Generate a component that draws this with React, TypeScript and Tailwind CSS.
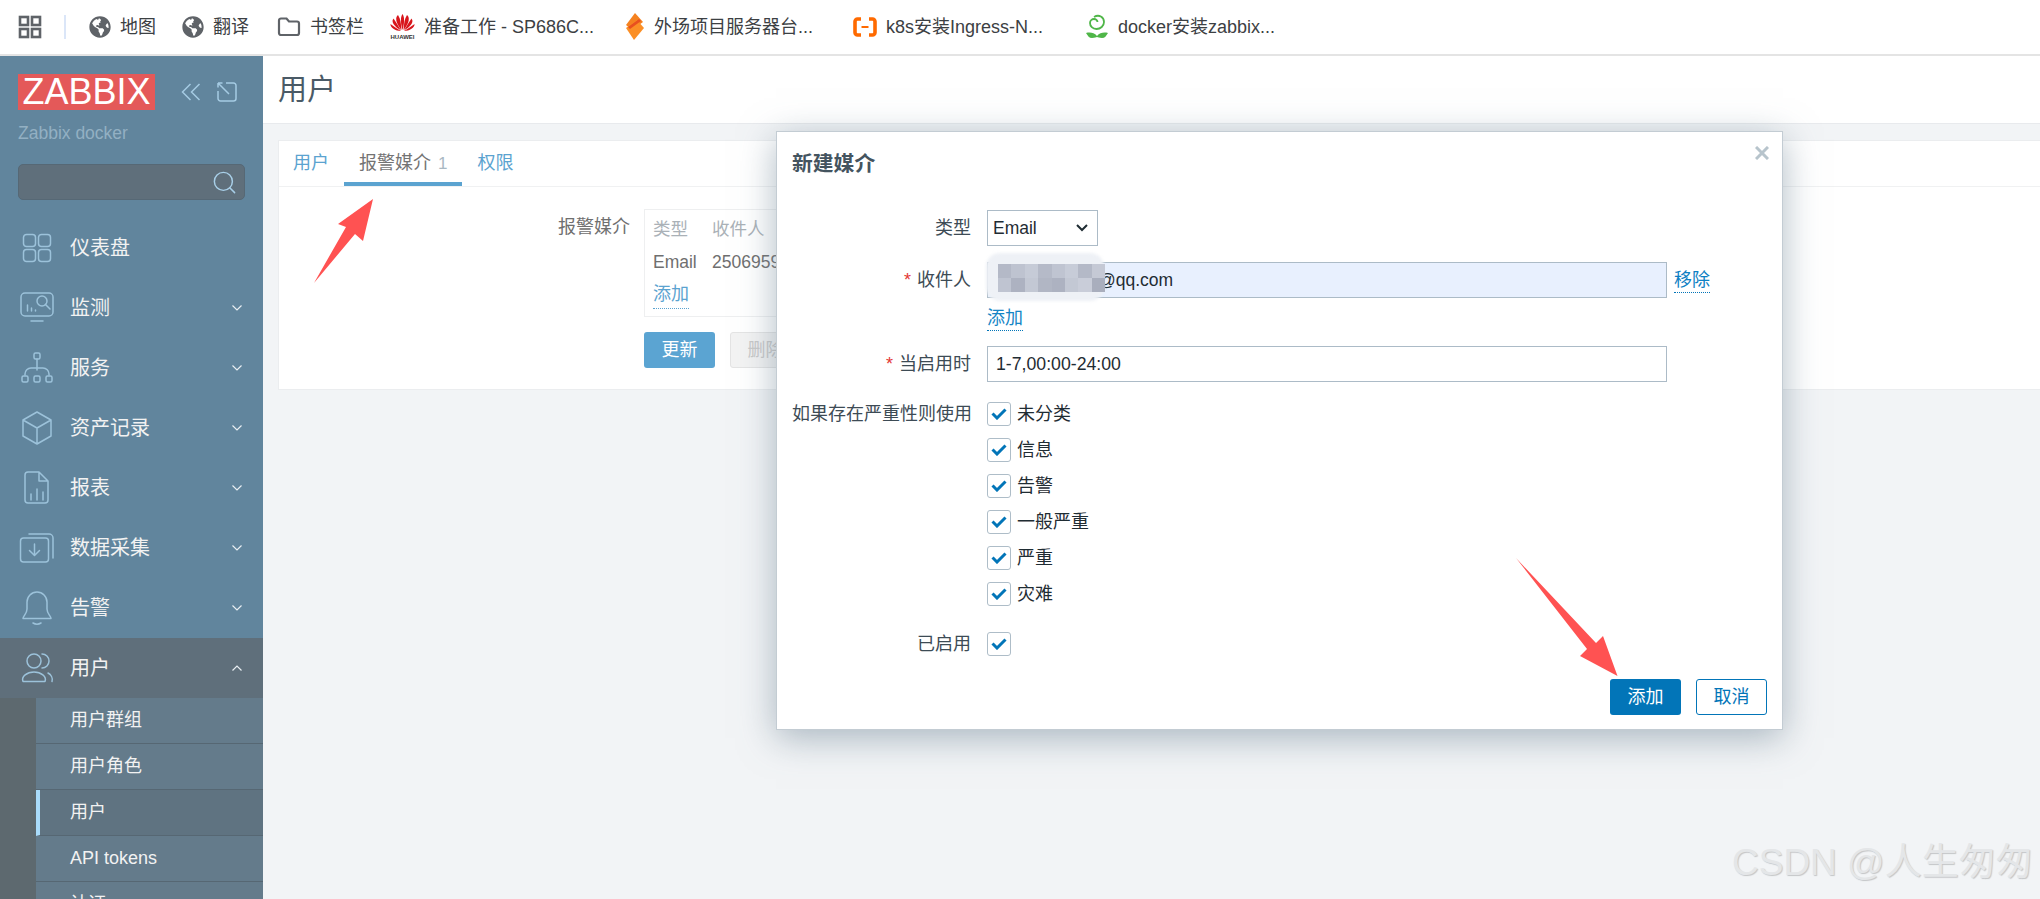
import type { ReactNode } from "react";
import { FaGlobeAmericas } from "react-icons/fa";
import { Search } from "lucide-react";

const font = "font-['Liberation_Sans','Noto_Sans_CJK_SC',sans-serif]";

const bookmarks = [
  { w: "w-[93px]", icon: "globe", text: "地图" },
  { w: "w-[95px]", icon: "globe", text: "翻译" },
  { w: "w-[113px]", icon: "folder", text: "书签栏" },
  { w: "w-[234px]", icon: "huawei", text: "准备工作 - SP686C..." },
  { w: "w-[229px]", icon: "diamond", text: "外场项目服务器台..." },
  { w: "w-[232px]", icon: "aliyun", text: "k8s安装Ingress-N..." },
  { w: "w-[240px]", icon: "leaf", text: "docker安装zabbix..." },
];

function BookmarkIcon({ name }: { name: string }) {
  if (name === "globe") return <FaGlobeAmericas size={22} className="text-[#5f6368]" />;
  if (name === "folder")
    return (
      <svg width="24" height="22" viewBox="0 0 24 22" fill="none" stroke="#5f6368" strokeWidth="2.2">
        <path d="M2 4.500a2 2 0 0 1 2-2h5.500l2.500 3h8a2 2 0 0 1 2 2V17a2 2 0 0 1-2 2H4a2 2 0 0 1-2-2z" />
      </svg>
    );
  if (name === "huawei")
    return (
      <svg width="25" height="26" viewBox="0 0 25 26">
        <g fill="#d8161c">
          <path d="M12.500 0c-2.200 3-2 9 0 16 2-7 2.200-13 0-16z" />
          <path d="M8 1C5 3 5.500 9 11.500 16 11 10 10.500 4.500 8 1z" />
          <path d="M17 1c3 2 2.500 8-3.500 15C14 10 14.500 4.500 17 1z" />
          <path d="M3.500 4.500C.5 8 5 13 11 16.500 8.500 12 6 8 3.500 4.500z" />
          <path d="M21.500 4.500c3 3.500-1.500 8.500-7.500 12 2.500-4.500 5-8.500 7.500-12z" />
          <path d="M.5 10c-.5 3.500 5 7 10.500 7C7.500 15 4 12.500.5 10z" />
          <path d="M24.500 10c.5 3.500-5 7-10.500 7 3.500-2 7-4.500 10.500-7z" />
        </g>
        <text x="12.500" y="24.500" textAnchor="middle" fontSize="6" fontWeight="700" fill="#333" fontFamily="Liberation Sans">
          HUAWEI
        </text>
      </svg>
    );
  if (name === "diamond")
    return (
      <svg width="21" height="28" viewBox="0 0 21 28">
        <path d="M11 0l8 9-11 8-6-5z" fill="#f58220" />
        <path d="M2 15l11-8 7 8-10 12z" fill="#fb8f26" />
        <path d="M4 14l11-8 2 2-11 8z" fill="#e8501f" />
      </svg>
    );
  if (name === "aliyun")
    return (
      <svg width="24" height="20" viewBox="0 0 24 20" fill="none" stroke="#ff6a00" strokeWidth="3.600">
        <path d="M8 2H4.500A2.500 2.500 0 0 0 2 4.500v11A2.500 2.500 0 0 0 4.500 18H8" />
        <path d="M16 2h3.500A2.500 2.500 0 0 1 22 4.500v11a2.500 2.500 0 0 1-2.500 2.500H16" />
        <path d="M8.500 10h7" strokeWidth="2" />
      </svg>
    );
  return (
    <svg width="24" height="26" viewBox="0 0 24 26" fill="none" stroke="#4fb648" strokeWidth="1.800">
      <path d="M9 3c5-3 10 0 10 5 0 4-3.500 7-7.500 7S5 12 5 9c0-2.500 2-4 4-4s3.500 1.500 3.500 3" />
      <path d="M1 19c4-1 8-.5 11 3 3-3.500 7-4 11-3-2 3-3 5-6 5s-4-1-5-1-2 1-5 1-4-2-6-5z" fill="#4fb648" stroke="none" />
    </svg>
  );
}

function Icon({ children }: { children: ReactNode }) {
  return (
    <svg width="36" height="36" viewBox="0 0 36 36" fill="none" stroke="#9cc2da" strokeWidth="1.500" strokeLinecap="round" strokeLinejoin="round" className="ml-[19px] shrink-0">
      {children}
    </svg>
  );
}

const menu: { label: string; open?: boolean; icon: ReactNode }[] = [
  {
    label: "监测",
    icon: (
      <>
        <rect x="2" y="3" width="32" height="23" rx="4" />
        <circle cx="23" cy="11" r="5" />
        <path d="M26.500 14.500L31 19M8.500 15v6M12.500 18v3M16.500 20v1M12 31h12" />
      </>
    ),
  },
  {
    label: "服务",
    icon: (
      <>
        <rect x="15" y="3" width="6" height="6" rx="1.500" />
        <path d="M18 9v11M6 25v-1a6 6 0 0 1 6-6h12a6 6 0 0 1 6 6v1" />
        <rect x="3" y="26" width="6" height="6" rx="1.500" />
        <rect x="15" y="26" width="6" height="6" rx="1.500" />
        <rect x="27" y="26" width="6" height="6" rx="1.500" />
      </>
    ),
  },
  {
    label: "资产记录",
    icon: <path d="M18 2l14 8v16l-14 8-14-8V10zM4 10l14 8 14-8M18 18v16" />,
  },
  {
    label: "报表",
    icon: (
      <>
        <path d="M9 2h11l9 9v19a3 3 0 0 1-3 3H9a3 3 0 0 1-3-3V5a3 3 0 0 1 3-3zM20 2v9h9M12 24v6M18 19v11M24 22v8" />
      </>
    ),
  },
  {
    label: "数据采集",
    icon: (
      <>
        <rect x="1.500" y="8" width="28" height="24" rx="3" />
        <path d="M10 4h20a4 4 0 0 1 4 4v20M15.500 14v11M10.500 20.500l5 5 5-5" />
      </>
    ),
  },
  {
    label: "告警",
    icon: <path d="M18 2a10 10 0 0 0-10 10v7c0 5-4 7-4 9.500h28c0-2.500-4-4.500-4-9.500v-7a10 10 0 0 0-10-10zM14 33q4 2.500 8 0" />,
  },
  {
    label: "用户",
    open: true,
    icon: (
      <>
        <circle cx="15" cy="11" r="7" />
        <path d="M4 31.500c-2-5 4-9.500 11-9.500s13 4.500 11 9.500zM23 4a7 7 0 0 1 0 14M29 23c3 1.500 5 5 4 8.500" />
      </>
    ),
  },
];

const subMenu = [
  { label: "用户群组" },
  { label: "用户角色" },
  { label: "用户", active: true },
  { label: "API tokens" },
  { label: "认证" },
];

function Sidebar() {
  return (
    <aside className="w-[263px] shrink-0 bg-[#61859d] flex flex-col overflow-hidden">
      <div className="shrink-0 flex items-center pl-[18px] pt-[18px]">
        <div className="w-[137px] h-[36px] bg-[#e45959] text-white text-[36px] leading-[36px] text-center font-['Liberation_Sans',sans-serif]">
          ZABBIX
        </div>
        <svg width="20" height="18" viewBox="0 0 20 18" fill="none" stroke="#a5cbe3" strokeWidth="1.500" className="ml-[26px]">
          <path d="M9.500 1L1.500 9l8 8M18.500 1l-8 8 8 8" />
        </svg>
        <svg width="20" height="20" viewBox="0 0 20 20" fill="none" stroke="#a5cbe3" strokeWidth="1.500" className="ml-[16px]">
          <path d="M9 1h7.500A2.500 2.500 0 0 1 19 3.500v13a2.500 2.500 0 0 1-2.500 2.500h-13A2.500 2.500 0 0 1 1 16.500V9M1 1l11 11M1 1h4.500M1 1v4.500" />
        </svg>
      </div>
      <div className="shrink-0 pl-[18px] mt-[11px] text-[17.5px] leading-[24px] text-[#93b0c3]">Zabbix docker</div>
      <div className="shrink-0 mx-[18px] mt-[19px] h-[36px] w-[227px] rounded-[5px] bg-[#5f6f7b] border border-[#566875] flex items-center justify-end pr-[6px]">
        <Search size={27} strokeWidth={1.300} className="text-[#a8cfe8]" />
      </div>
      <nav className="shrink-0 mt-[18px] flex flex-col">
        <div className="h-[60px] flex items-center text-[20px] text-[#f2f2f2]">
          <Icon>
            <rect x="4.500" y="4.500" width="12" height="12" rx="3" />
            <rect x="19.500" y="4.500" width="12" height="12" rx="3" />
            <rect x="4.500" y="19.500" width="12" height="12" rx="3" />
            <rect x="19.500" y="19.500" width="12" height="12" rx="3" />
          </Icon>
          <span className="ml-[15px]">仪表盘</span>
        </div>
        {menu.map((m) => (
          <div
            key={m.label}
            className={`h-[60px] flex items-center text-[20px] text-[#f2f2f2] ${m.open ? "bg-[#5f6f7b]" : ""}`}
          >
            <Icon>{m.icon}</Icon>
            <span className="ml-[15px] flex-1">{m.label}</span>
            <svg width="10" height="6" viewBox="0 0 10 6" fill="none" stroke="#e8eef2" strokeWidth="1.200" className={`mr-[21px] ${m.open ? "rotate-180" : ""}`}>
              <path d="M.5.5L5 5 9.500.5" />
            </svg>
          </div>
        ))}
      </nav>
      <div className="flex bg-[#5d696f] flex-1">
        <div className="w-[36px] shrink-0" />
        <div className="flex-1 flex flex-col">
          {subMenu.map((s) => (
            <div
              key={s.label}
              className={`h-[46px] shrink-0 flex items-center text-[18px] text-[#f2f2f2] border-b border-[#566773] ${
                s.active ? "bg-[#5f7381] border-l-4 border-l-[#a9dcfb] pl-[30px]" : "bg-[#647b8b] pl-[34px]"
              }`}
            >
              {s.label}
            </div>
          ))}
        </div>
      </div>
    </aside>
  );
}

function Check() {
  return (
    <div className="w-[24px] h-[24px] shrink-0 rounded-[3px] border border-[#aebdc8] bg-white flex items-center justify-center">
      <svg width="16" height="12" viewBox="0 0 16 12" fill="none" stroke="#0275b8" strokeWidth="3">
        <path d="M1.500 5.500l4.500 4.500L14.500 1.500" />
      </svg>
    </div>
  );
}

function Row({ label, required, className, children }: { label?: string; required?: boolean; className?: string; children: ReactNode }) {
  return (
    <div className={`flex items-start ${className ?? ""}`}>
      <div className="w-[179px] shrink-0 text-right text-[18px] leading-[36px] text-[#3d4b55] whitespace-nowrap">
        {required && <span className="text-[#e33734] mr-[6px]">*</span>}
        {label}
      </div>
      <div className="ml-[16px] flex-1 min-w-0">{children}</div>
    </div>
  );
}

const mosaic = [
  ["#b4b9c7", "#bec3d0", "#c6cbd7", "#b5bac8", "#bfc4d1", "#c7ccd8", "#b4b9c7", "#c5c9d5"],
  ["#bfc4d1", "#adb2c1", "#c3c8d4", "#b1b6c4", "#adb2c1", "#c3c8d4", "#c9cdd9", "#a9aebd"],
];

function Modal() {
  return (
    <div className="absolute left-[776px] top-[131px] w-[1007px] h-[599px] bg-white border border-[#c3ccd3] shadow-[0_8px_34px_rgba(110,132,148,0.55)] text-[17.5px] text-[#1f2c33] px-[15px] z-10">
      <svg width="14" height="14" viewBox="0 0 14 14" stroke="#b7c4cc" strokeWidth="3" className="absolute right-[13px] top-[14px]">
        <path d="M1 1l12 12M13 1L1 13" />
      </svg>
      <div className="mt-[18px] text-[20.8px] leading-[28px] font-bold text-[#44545f]">新建媒介</div>
      <Row label="类型" className="mt-[32px]">
        <div className="w-[111px] h-[36px] border border-[#acbbc7] flex items-center justify-between pl-[5px] pr-[9px]">
          Email
          <svg width="12" height="8" viewBox="0 0 12 8" fill="none" stroke="#1f2c33" strokeWidth="2">
            <path d="M1 1l5 5 5-5" />
          </svg>
        </div>
      </Row>
      <Row label="收件人" required className="mt-[16px]">
        <div className="flex items-center">
          <div className="relative w-[680px] h-[36px] border border-[#acbbc7] bg-[#e8f0fe] flex items-center pl-[110px]">
            @qq.com
            <div className="absolute -left-[2px] -top-[10px] w-[118px] h-[48px] rounded-[14px] bg-[#eef1f6] blur-[1.500px]" />
            <div className="absolute left-[10px] top-[1px] w-[107px] flex flex-col blur-[0.500px]">
              {mosaic.map((cells, i) => (
                <div key={i} className="flex h-[14px]">
                  {cells.map((c, j) => (
                    <div key={j} className="flex-1" style={{ backgroundColor: c }} />
                  ))}
                </div>
              ))}
            </div>
          </div>
          <span className="ml-[7px] text-[#0d80c3] border-b border-dotted border-[#0275b8] leading-[24px] text-[18px]">移除</span>
        </div>
        <div className="mt-[7px] h-[30px]">
          <span className="inline-block text-[#1585c5] border-b border-dotted border-[#0275b8] leading-[24px] text-[18px]">添加</span>
        </div>
      </Row>
      <Row label="当启用时" required className="mt-[11px]">
        <div className="w-[680px] h-[36px] border border-[#acbbc7] flex items-center pl-[8px] text-[17.7px]">1-7,00:00-24:00</div>
      </Row>
      <Row label="如果存在严重性则使用" className="mt-[20px] [&>div:first-child]:leading-[24px]">
        <div className="flex flex-col gap-[12px]">
          {["未分类", "信息", "告警", "一般严重", "严重", "灾难"].map((s) => (
            <div key={s} className="flex items-center gap-[6px] h-[24px]">
              <Check />
              <span className="leading-[24px] text-[18px]">{s}</span>
            </div>
          ))}
        </div>
      </Row>
      <Row label="已启用" className="mt-[26px] [&>div:first-child]:leading-[24px]">
        <Check />
      </Row>
      <div className="mt-[23px] flex justify-end gap-[15px]">
        <div className="w-[71px] h-[36px] rounded-[3px] bg-[#0275b8] text-white flex items-center justify-center text-[18px]">添加</div>
        <div className="w-[71px] h-[36px] rounded-[3px] border border-[#0275b8] text-[#0275b8] flex items-center justify-center text-[18px]">取消</div>
      </div>
    </div>
  );
}

export default function App() {
  return (
    <div className={`relative w-full h-screen overflow-hidden flex flex-col bg-[#f2f4f6] ${font}`}>
      <header className="h-[56px] shrink-0 bg-white border-b-2 border-[#e4e4e4] flex items-center">
        <svg width="24" height="24" viewBox="0 0 24 24" fill="none" stroke="#5f6368" strokeWidth="2.600" className="ml-[18px]">
          <rect x="2" y="2" width="8" height="8" />
          <rect x="14" y="2" width="8" height="8" />
          <rect x="2" y="14" width="8" height="8" />
          <rect x="14" y="14" width="8" height="8" />
        </svg>
        <div className="ml-[22px] mr-[23px] w-[2px] h-[24px] bg-[#dbe6f8]" />
        {bookmarks.map((b) => (
          <div key={b.text} className={`${b.w} shrink-0 flex items-center gap-[9px] text-[18px] text-[#3c4043] whitespace-nowrap`}>
            <BookmarkIcon name={b.icon} />
            <span>{b.text}</span>
          </div>
        ))}
      </header>
      <div className="flex flex-1 min-h-0">
        <Sidebar />
        <main className="flex-1 min-w-0">
          <div className="h-[68px] bg-white border-b border-[#e8eaed] flex items-center pl-[15px] pt-[3px] text-[29px] text-[#4a5a66]">用户</div>
          <section className="mt-[16px] ml-[15px] h-[250px] bg-white border-y border-l border-[#ebedef] text-[18px]">
            <div className="h-[46px] border-b border-[#f0f1f2] flex">
              <div className="pl-[14px] pr-[15px] leading-[44px] text-[#5ba3d0]">用户</div>
              <div className="px-[15px] leading-[44px] text-[#737373] border-b-4 border-[#5ba3d0]">
                报警媒介<span className="ml-[7px] text-[#a9b8c3] text-[17px]">1</span>
              </div>
              <div className="px-[15px] leading-[44px] text-[#5ba3d0]">权限</div>
            </div>
            <div className="flex mt-[22px]">
              <div className="w-[365px] text-right pr-[14px] text-[#6f6f6f] leading-[36px]">报警媒介</div>
              <div>
                <div className="w-[900px] h-[108px] border border-[#eeeff0] pl-[8px] pt-[2px] text-[17.5px]">
                  <div className="flex h-[34px] items-center text-[#aab1b7]">
                    <span className="w-[59px]">类型</span>
                    <span>收件人</span>
                  </div>
                  <div className="flex h-[32px] items-center text-[#6f6f6f]">
                    <span className="w-[59px]">Email</span>
                    <span>2506959</span>
                  </div>
                  <span className="inline-block mt-[2px] text-[18px] leading-[28px] text-[#5ba3d0] border-b border-dotted border-[#5ba3d0]">添加</span>
                </div>
                <div className="mt-[15px] flex gap-[15px]">
                  <div className="w-[71px] h-[36px] rounded-[3px] bg-[#5ba4d2] text-white flex items-center justify-center">更新</div>
                  <div className="w-[71px] h-[36px] rounded-[3px] bg-[#f3f3f3] border border-[#e4e4e4] text-[#c9c9c9] flex items-center justify-center">删除</div>
                </div>
              </div>
            </div>
          </section>
        </main>
      </div>
      <Modal />
      <svg width="2040" height="899" viewBox="0 0 2040 899" fill="#ff5252" className="absolute inset-0 pointer-events-none z-20">
        <path d="M373 199L338 224L346 227L314 283L355 234L363 241z" />
        <path d="M1516 558L1596 643L1603 636L1617.500 676L1580 656L1587 649z" />
      </svg>
      <div className="absolute left-[1732px] top-[836px] text-[37px] leading-[54px] text-[#e4e6e8] [text-shadow:1px_1px_1px_#c4c6c8] whitespace-nowrap">
        CSDN @人生匆匆
      </div>
    </div>
  );
}
